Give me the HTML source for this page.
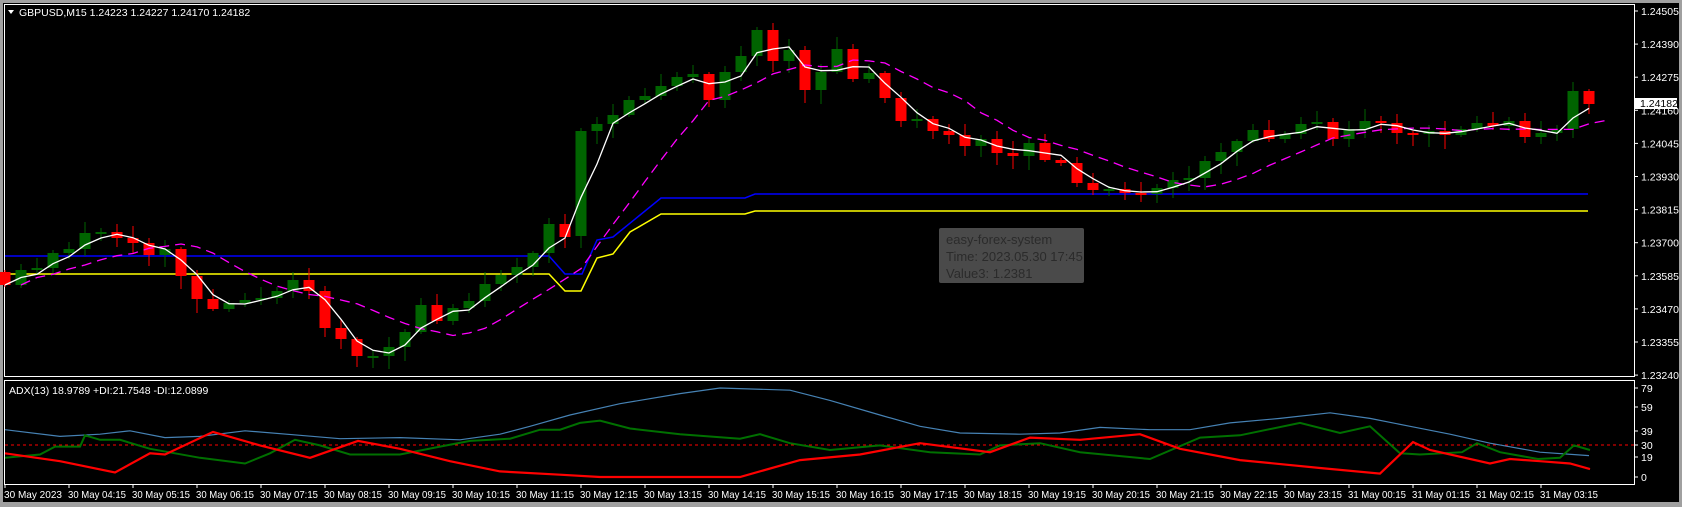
<!DOCTYPE html>
<html><head><meta charset="utf-8"><style>
html,body{margin:0;padding:0;background:#a0a0a0;}
svg{display:block;}
text{font-family:"Liberation Sans",sans-serif;font-size:10.5px;fill:#fff;}
</style></head><body>
<svg id="s" width="1682" height="507" xmlns="http://www.w3.org/2000/svg"></svg>
<script>
(function(){
var C=[285,270,268,253,249,233,232,238,243,255,249,276,299,309,303,300,298,291,280,291,328,339,356,356,347,332,305,321,308,301,284,275,267,253,224,237,131,124,115,100,96,86,77,74,100,72,56,30,61,50,90,72,49,79,73,98,121,119,131,135,146,139,153,156,143,160,163,183,190,189,193,194,188,180,178,161,152,141,130,139,134,124,122,139,129,121,123,133,134,131,135,129,123,126,121,137,133,130,91,104];
var O=[272];for(var i=1;i<C.length;i++)O.push(C[i-1]);
O[36]=236;O[98]=129;O[12]=276;
var h='';
h+='<rect x="0" y="0" width="1682" height="507" fill="#a0a0a0"/>';
h+='<rect x="3" y="3" width="1676" height="499" fill="#000"/>';
h+='<rect x="4.5" y="4.5" width="1630" height="372" fill="none" stroke="#fff" stroke-width="1"/>';
h+='<rect x="4.5" y="380.5" width="1630" height="104" fill="none" stroke="#fff" stroke-width="1"/>';
h+='<text x="19" y="16">GBPUSD,M15  1.24223 1.24227 1.24170 1.24182</text>';
h+='<path d="M8 10 L14 10 L11 14 Z" fill="#fff"/>';
var pl=['1.24505','1.24390','1.24275','1.24160','1.24045','1.23930','1.23815','1.23700','1.23585','1.23470','1.23355','1.23240'];
for(var k=0;k<pl.length;k++){var y=11+k*33.1;h+='<line x1="1634" x2="1638" y1="'+y+'" y2="'+y+'" stroke="#fff"/><text x="1641" y="'+(y+4)+'">'+pl[k]+'</text>';}
h+='<rect x="1635" y="98" width="42" height="11" fill="#fff"/><text x="1640" y="107" style="fill:#000">1.24182</text>';
var al=[[79,388],[59,407],[39,431],[30,445],[19,457],[0,477]];
al.forEach(function(a){h+='<line x1="1634" x2="1638" y1="'+a[1]+'" y2="'+a[1]+'" stroke="#fff"/><text x="1641" y="'+(a[1]+4)+'">'+a[0]+'</text>';});
h+='<polyline fill="none" stroke="#0000ff" stroke-width="1.5" points="5,256 549,256 565,274 582,274 597,240 613,237 661,198 745,198 755,194 1588,194"/>';
h+='<polyline fill="none" stroke="#ffff00" stroke-width="1.5" points="5,274 549,274 565,291 581,291 597,258 613,254 630,232 661,214 745,214 755,211 1588,211"/>';
for(var i=0;i<C.length;i++){var x=5+16*i,o=O[i],c=C[i];var tp=Math.min(o,c),bt=Math.max(o,c);
var r1=((i*37)%11)+2,r2=((i*53)%13)+2;var col=c>o?'#ff0000':'#006400';
h+='<line x1="'+x+'" x2="'+x+'" y1="'+(tp-r1)+'" y2="'+(bt+r2)+'" stroke="'+col+'"/>';
h+='<rect x="'+(x-5.5)+'" y="'+tp+'" width="11" height="'+Math.max(bt-tp,2)+'" fill="'+col+'"/>';}
var w='',m='';
for(var i=0;i<C.length;i++){var s=0,n=0;for(var j=Math.max(0,i-2);j<=i;j++){s+=C[j];n++;}w+=(5+16*i)+','+(s/n).toFixed(1)+' ';}
for(var i=0;i<C.length;i++){var s=0,n=0;for(var j=Math.max(0,i-7);j<=i;j++){s+=C[j];n++;}m+=(5+16*(i+1))+','+(s/n).toFixed(1)+' ';}
h+='<polyline fill="none" stroke="#ff00ff" stroke-width="1.3" stroke-dasharray="10,6" points="'+m+'"/>';
h+='<polyline fill="none" stroke="#fff" stroke-width="1.3" points="'+w+'"/>';
h+='<rect x="939" y="228" width="145" height="55" rx="2" fill="#4a4a4a"/>';
h+='<text x="946" y="244" style="fill:#2b2b2b;font-size:13px">easy-forex-system</text>';
h+='<text x="946" y="261" style="fill:#2b2b2b;font-size:13px">Time: 2023.05.30 17:45</text>';
h+='<text x="946" y="278" style="fill:#2b2b2b;font-size:13px">Value3: 1.2381</text>';
h+='<text x="9" y="394">ADX(13) 18.9789 +DI:21.7548 -DI:12.0899</text>';
h+='<line x1="5" x2="1634" y1="445" y2="445" stroke="#ff0000" stroke-dasharray="3,3"/>';
function pts(a){return a.map(function(p){return p[0]+','+(477-p[1]*1.127).toFixed(1)}).join(' ');}
var B=[[5,42],[60,36],[100,38],[130,41],[165,35],[200,36],[245,41],[300,37],[340,34],[400,35],[460,33],[500,38],[530,45],[570,55],[620,65],[680,74],[720,79],[790,77],[830,68],[880,55],[920,45],[960,39],[1020,38],[1060,39],[1100,44],[1150,42],[1190,42],[1230,48],[1280,52],[1330,57],[1370,52],[1410,45],[1450,38],[1490,30],[1540,22],[1589,19]];
var G=[[5,17],[40,20],[55,27],[80,27],[85,37],[100,33],[120,33],[150,25],[200,17],[245,12],[270,21],[295,33],[320,28],[350,20],[400,20],[440,27],[470,32],[510,34],[540,42],[560,42],[580,48],[600,50],[630,43],[680,38],[740,34],[760,38],[790,30],[830,24],[880,28],[930,22],[980,20],[1000,28],[1040,30],[1080,22],[1150,16],[1200,35],[1240,37],[1300,48],[1340,39],[1370,45],[1400,21],[1420,20],[1462,22],[1477,30],[1500,22],[1538,16],[1560,17],[1574,28],[1590,24]];
var R=[[5,21],[60,14],[115,4],[150,21],[165,20],[213,40],[260,28],[310,17],[358,32],[400,25],[450,14],[500,5],[560,2],[600,0],[740,0],[800,15],[860,20],[920,30],[990,22],[1030,35],[1080,33],[1140,38],[1180,25],[1240,15],[1320,8],[1380,3],[1413,31],[1430,24],[1490,12],[1510,16],[1540,14],[1570,12],[1590,7]];
h+='<polyline fill="none" stroke="#4682b4" stroke-width="1.2" points="'+pts(B)+'"/>';
h+='<polyline fill="none" stroke="#007000" stroke-width="2" points="'+pts(G)+'"/>';
h+='<polyline fill="none" stroke="#ff0000" stroke-width="2.2" points="'+pts(R)+'"/>';
var tl=['30 May 2023'];for(var k=4;k<=23;k++)tl.push('30 May '+(k<10?'0':'')+k+':15');for(var k=0;k<=3;k++)tl.push('31 May 0'+k+':15');
for(var k=0;k<tl.length;k++){var x=5+64*k;h+='<line x1="'+x+'" x2="'+x+'" y1="484" y2="488" stroke="#fff"/><text x="'+(x-1)+'" y="498" textLength="58" lengthAdjust="spacingAndGlyphs">'+tl[k]+'</text>';}
document.getElementById('s').innerHTML=h;
})();
</script>
</body></html>
